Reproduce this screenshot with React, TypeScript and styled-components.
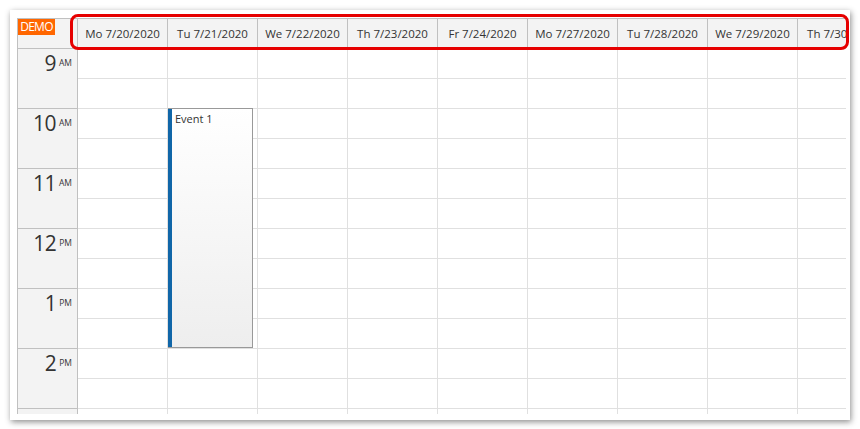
import React from 'react';
import styled, {createGlobalStyle} from 'styled-components';

const GlobalStyle = createGlobalStyle`
  html, body {
    margin: 0;
    padding: 0;
    background: #ffffff;
  }
  body {
    font-family: "Open Sans", "Noto Sans", sans-serif;
    color: #333333;
  }
`;

const colors = {
  border: '#c0c0c0',
  grid: '#e0e0e0',
  headerBg: '#f3f3f3',
  text: '#333333',
  demo: '#ff6600',
  bar: '#1066a8',
  highlight: '#e60000'
};

const days = [
  'Mo 7/20/2020',
  'Tu 7/21/2020',
  'We 7/22/2020',
  'Th 7/23/2020',
  'Fr 7/24/2020',
  'Mo 7/27/2020',
  'Tu 7/28/2020',
  'We 7/29/2020',
  'Th 7/30/2020'
];

// the last hour row is only partly in view, so it carries no label
const hours = [
  {hour: '9', suffix: 'AM'},
  {hour: '10', suffix: 'AM'},
  {hour: '11', suffix: 'AM'},
  {hour: '12', suffix: 'PM'},
  {hour: '1', suffix: 'PM'},
  {hour: '2', suffix: 'PM'},
  {hour: '', suffix: ''}
];

const events = [{day: 1, text: 'Event 1', startSlot: 2, slots: 8}];

const SLOT_HEIGHT = 30;

const Page = styled.div`
  padding: 10px;
`;

const Panel = styled.div`
  position: relative;
  box-sizing: border-box;
  width: 840px;
  height: 410px;
  padding: 8px 0 0 7px;
  background: #ffffff;
  box-shadow: 1px 2px 6px rgba(0, 0, 0, 0.45);
`;

const Highlight = styled.div`
  position: absolute;
  left: 60px;
  top: 4px;
  width: 779px;
  height: 36px;
  box-sizing: border-box;
  border: 3px solid ${colors.highlight};
  border-radius: 8px;
  pointer-events: none;
`;

const Calendar = styled.div`
  display: flex;
  flex-direction: column;
  width: 829px;
  height: 396px;
  box-sizing: border-box;
  border-left: 1px solid ${colors.border};
  border-top: 1px solid ${colors.border};
  overflow: hidden;
`;

const HeaderRow = styled.div`
  display: flex;
  flex-shrink: 0;
  height: 30px;
`;

const Corner = styled.div`
  width: 60px;
  flex-shrink: 0;
  box-sizing: border-box;
  background: ${colors.headerBg};
  border-right: 1px solid ${colors.border};
  border-bottom: 1px solid ${colors.border};
`;

const DemoBadge = styled.div`
  width: 37px;
  height: 16px;
  background: ${colors.demo};
  color: #ffffff;
  font-size: 12px;
  letter-spacing: -0.7px;
  line-height: 16px;
  text-align: center;
`;

const DayHeader = styled.div`
  display: flex;
  align-items: center;
  justify-content: center;
  width: 90px;
  flex-shrink: 0;
  box-sizing: border-box;
  background: ${colors.headerBg};
  border-right: 1px solid ${colors.border};
  border-bottom: 1px solid ${colors.border};
  font-size: 11.5px;
  color: ${colors.text};
  white-space: nowrap;
`;

const Body = styled.div`
  display: flex;
  flex: 1;
`;

const TimeColumn = styled.div`
  width: 60px;
  flex-shrink: 0;
  box-sizing: border-box;
  background: ${colors.headerBg};
  border-right: 1px solid ${colors.border};
`;

const HourCell = styled.div`
  display: flex;
  justify-content: flex-end;
  align-items: flex-start;
  height: ${SLOT_HEIGHT * 2}px;
  box-sizing: border-box;
  padding: 5px 5px 0 0;
  border-bottom: 1px solid ${colors.border};
  color: ${colors.text};
`;

const HourNumber = styled.span`
  font-size: 21px;
  line-height: 18px;
  letter-spacing: -0.5px;
`;

const HourSuffix = styled.span`
  font-size: 8.5px;
  line-height: 9px;
  margin: 4px 0 0 3px;
`;

const DayColumn = styled.div`
  position: relative;
  width: 90px;
  flex-shrink: 0;
  box-sizing: border-box;
  border-right: 1px solid ${colors.grid};
`;

const Slot = styled.div`
  height: ${SLOT_HEIGHT}px;
  box-sizing: border-box;
  border-bottom: 1px solid ${colors.grid};
`;

const EventBox = styled.div`
  position: absolute;
  left: 0;
  width: 85px;
  box-sizing: border-box;
  display: flex;
  border: 1px solid #999999;
  border-left: none;
  background: linear-gradient(to bottom, #ffffff 0%, #eeeeee 100%);
  overflow: hidden;
`;

const EventBar = styled.div`
  width: 4px;
  flex-shrink: 0;
  background: ${colors.bar};
`;

const EventText = styled.div`
  padding: 2px 3px;
  font-size: 11px;
  line-height: 15px;
  color: ${colors.text};
`;

const App = () => {
  const slotCount = hours.length * 2;

  return (
    <Page>
      <GlobalStyle />
      <Panel>
        <Calendar>
          <HeaderRow>
            <Corner>
              <DemoBadge>DEMO</DemoBadge>
            </Corner>
            {days.map(day => (
              <DayHeader key={day}>{day}</DayHeader>
            ))}
          </HeaderRow>
          <Body>
            <TimeColumn>
              {hours.map((h, i) => (
                <HourCell key={i}>
                  {h.hour && (
                    <>
                      <HourNumber>{h.hour}</HourNumber>
                      <HourSuffix>{h.suffix}</HourSuffix>
                    </>
                  )}
                </HourCell>
              ))}
            </TimeColumn>
            {days.map((day, i) => (
              <DayColumn key={day}>
                {Array.from({length: slotCount}).map((_, s) => (
                  <Slot key={s} />
                ))}
                {events
                  .filter(e => e.day === i)
                  .map(e => (
                    <EventBox
                      key={e.text}
                      style={{top: e.startSlot * SLOT_HEIGHT - 1, height: e.slots * SLOT_HEIGHT}}
                    >
                      <EventBar />
                      <EventText>{e.text}</EventText>
                    </EventBox>
                  ))}
              </DayColumn>
            ))}
          </Body>
        </Calendar>
        <Highlight />
      </Panel>
    </Page>
  );
};

export default App;
